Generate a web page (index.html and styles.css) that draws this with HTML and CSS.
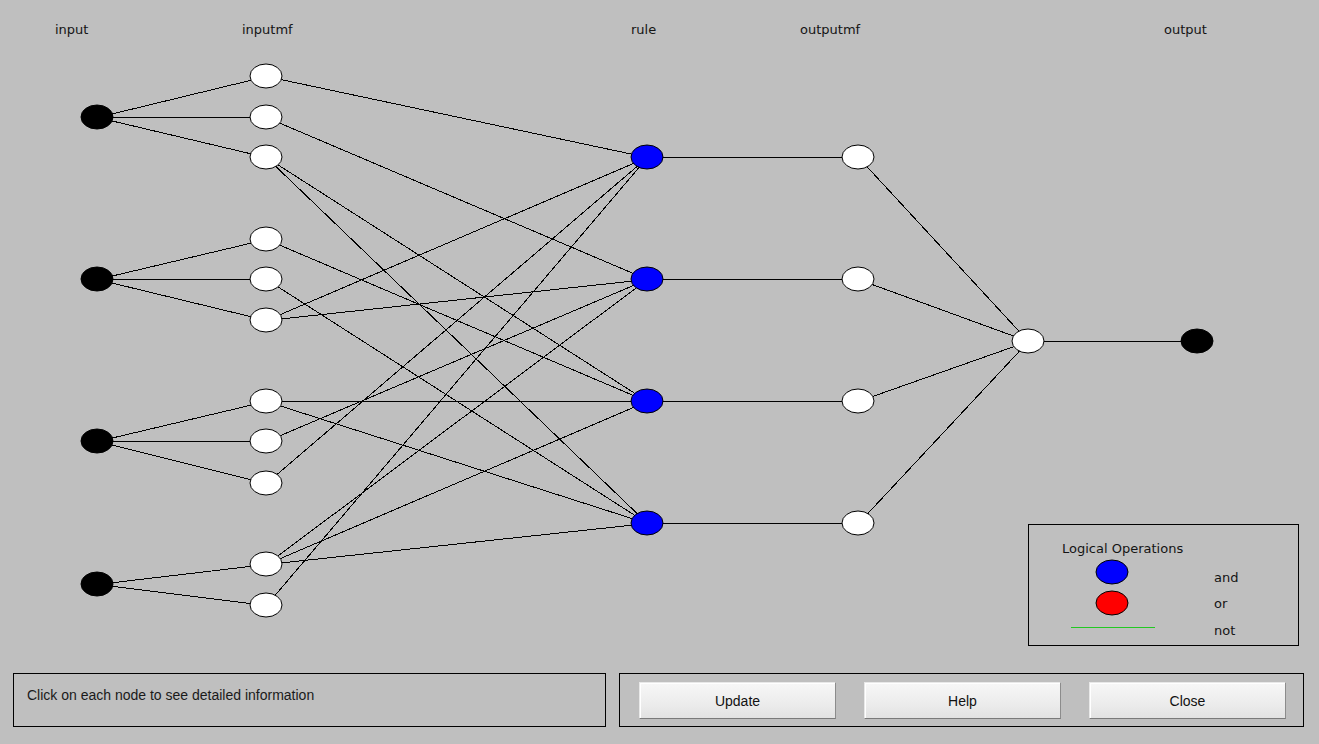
FILE: index.html
```html
<!DOCTYPE html>
<html>
<head>
<meta charset="utf-8">
<title>ANFIS Model Structure</title>
<link rel="stylesheet" href="styles.css">
</head>
<body>
<div class="diagram">
<svg class="canvas" width="1319" height="665" viewBox="0 0 1319 665" xmlns="http://www.w3.org/2000/svg">
  <g class="layer-labels">
    <text x="55" y="34">input</text>
    <text x="242" y="34">inputmf</text>
    <text x="631" y="34">rule</text>
    <text x="800" y="34">outputmf</text>
    <text x="1164" y="34">output</text>
  </g>
  <g class="links" transform="translate(0.5 0.5)">
    <line x1="97" y1="117" x2="266" y2="76"/>
    <line x1="97" y1="117" x2="266" y2="117"/>
    <line x1="97" y1="117" x2="266" y2="157"/>
    <line x1="97" y1="279" x2="266" y2="239"/>
    <line x1="97" y1="279" x2="266" y2="279"/>
    <line x1="97" y1="279" x2="266" y2="320"/>
    <line x1="97" y1="441" x2="266" y2="401"/>
    <line x1="97" y1="441" x2="266" y2="441"/>
    <line x1="97" y1="441" x2="266" y2="483"/>
    <line x1="97" y1="584" x2="266" y2="564"/>
    <line x1="97" y1="584" x2="266" y2="605"/>

    <line x1="266" y1="76" x2="647" y2="157"/>
    <line x1="266" y1="117" x2="647" y2="279"/>
    <line x1="266" y1="157" x2="647" y2="401"/>
    <line x1="266" y1="157" x2="647" y2="523"/>
    <line x1="266" y1="239" x2="647" y2="401"/>
    <line x1="266" y1="279" x2="647" y2="523"/>
    <line x1="266" y1="320" x2="647" y2="157"/>
    <line x1="266" y1="320" x2="647" y2="279"/>
    <line x1="266" y1="401" x2="647" y2="401"/>
    <line x1="266" y1="401" x2="647" y2="523"/>
    <line x1="266" y1="441" x2="647" y2="279"/>
    <line x1="266" y1="483" x2="647" y2="157"/>
    <line x1="266" y1="564" x2="647" y2="279"/>
    <line x1="266" y1="564" x2="647" y2="401"/>
    <line x1="266" y1="564" x2="647" y2="523"/>
    <line x1="266" y1="605" x2="647" y2="157"/>

    <line x1="647" y1="157" x2="858" y2="157"/>
    <line x1="647" y1="279" x2="858" y2="279"/>
    <line x1="647" y1="401" x2="858" y2="401"/>
    <line x1="647" y1="523" x2="858" y2="523"/>

    <line x1="858" y1="157" x2="1028" y2="341"/>
    <line x1="858" y1="279" x2="1028" y2="341"/>
    <line x1="858" y1="401" x2="1028" y2="341"/>
    <line x1="858" y1="523" x2="1028" y2="341"/>
    <line x1="1028" y1="341" x2="1197" y2="341"/>
  </g>
  <g class="nodes">
    <ellipse class="n-black" cx="97" cy="117" rx="16" ry="12"/>
    <ellipse class="n-black" cx="97" cy="279" rx="16" ry="12"/>
    <ellipse class="n-black" cx="97" cy="441" rx="16" ry="12"/>
    <ellipse class="n-black" cx="97" cy="584" rx="16" ry="12"/>

    <ellipse class="n-white" cx="266" cy="76" rx="16" ry="12"/>
    <ellipse class="n-white" cx="266" cy="117" rx="16" ry="12"/>
    <ellipse class="n-white" cx="266" cy="157" rx="16" ry="12"/>
    <ellipse class="n-white" cx="266" cy="239" rx="16" ry="12"/>
    <ellipse class="n-white" cx="266" cy="279" rx="16" ry="12"/>
    <ellipse class="n-white" cx="266" cy="320" rx="16" ry="12"/>
    <ellipse class="n-white" cx="266" cy="401" rx="16" ry="12"/>
    <ellipse class="n-white" cx="266" cy="441" rx="16" ry="12"/>
    <ellipse class="n-white" cx="266" cy="483" rx="16" ry="12"/>
    <ellipse class="n-white" cx="266" cy="564" rx="16" ry="12"/>
    <ellipse class="n-white" cx="266" cy="605" rx="16" ry="12"/>

    <ellipse class="n-blue" cx="647" cy="157" rx="16" ry="12"/>
    <ellipse class="n-blue" cx="647" cy="279" rx="16" ry="12"/>
    <ellipse class="n-blue" cx="647" cy="401" rx="16" ry="12"/>
    <ellipse class="n-blue" cx="647" cy="523" rx="16" ry="12"/>

    <ellipse class="n-white" cx="858" cy="157" rx="16" ry="12"/>
    <ellipse class="n-white" cx="858" cy="279" rx="16" ry="12"/>
    <ellipse class="n-white" cx="858" cy="401" rx="16" ry="12"/>
    <ellipse class="n-white" cx="858" cy="523" rx="16" ry="12"/>

    <ellipse class="n-white" cx="1028" cy="341" rx="16" ry="12"/>
    <ellipse class="n-black" cx="1197" cy="341" rx="16" ry="12"/>
  </g>
  <g class="legend">
    <rect class="legend-box" x="1028.5" y="524.5" width="270" height="121"/>
    <text x="1062" y="553">Logical Operations</text>
    <ellipse class="n-blue" cx="1112" cy="572" rx="16" ry="12"/>
    <ellipse class="n-red" cx="1112" cy="603" rx="16" ry="12"/>
    <line class="not-line" x1="1071" y1="627.5" x2="1155" y2="627.5"/>
    <text x="1214" y="582">and</text>
    <text x="1214" y="608">or</text>
    <text x="1214" y="635">not</text>
  </g>
</svg>
</div>
<div class="bottom">
  <div class="info">Click on each node to see detailed information</div>
  <div class="actions">
    <button class="btn">Update</button>
    <button class="btn">Help</button>
    <button class="btn">Close</button>
  </div>
</div>
</body>
</html>
```
FILE: styles.css
```css
html, body {
  margin: 0;
  padding: 0;
}
body {
  width: 1319px;
  height: 744px;
  overflow: hidden;
  background: #bfbfbf;
  font-family: "Liberation Sans", Arial, sans-serif;
}
.diagram {
  height: 665px;
}
.canvas {
  display: block;
}
.canvas text {
  font-family: "DejaVu Sans", sans-serif;
  font-size: 13px;
  fill: #141414;
}
.links line {
  stroke: #000;
  stroke-width: 1;
  shape-rendering: crispEdges;
}
.canvas ellipse {
  stroke: #000;
  stroke-width: 1;
}
.n-black { fill: #000; }
.n-white { fill: #fff; }
.n-blue { fill: #0000ff; }
.n-red { fill: #ff0000; }
.legend-box {
  fill: none;
  stroke: #000;
  stroke-width: 1;
}
.not-line {
  stroke: #22c822;
  stroke-width: 1;
  shape-rendering: crispEdges;
}
.bottom {
  display: flex;
  gap: 13px;
  padding: 8px 0 0 13px;
}
.info {
  box-sizing: border-box;
  width: 593px;
  height: 54px;
  border: 1px solid #000;
  padding: 13px 0 0 13px;
  font-size: 14px;
  line-height: 16px;
  color: #1a1a1a;
}
.actions {
  box-sizing: border-box;
  width: 685px;
  height: 54px;
  border: 1px solid #000;
  display: flex;
  align-items: flex-start;
  gap: 28px;
  padding: 8px 0 0 19px;
}
.btn {
  box-sizing: border-box;
  width: 197px;
  height: 37px;
  margin: 0;
  padding: 0;
  font-family: "Liberation Sans", Arial, sans-serif;
  font-size: 14px;
  color: #111;
  background: linear-gradient(#f7f7f7, #ececec 60%, #e2e2e2);
  border: 1px solid #e8e8e8;
  border-right-color: #8c8c8c;
  border-bottom-color: #7a7a7a;
  box-shadow: inset 1px 1px 0 #ffffff;
  border-radius: 0;
}
```
